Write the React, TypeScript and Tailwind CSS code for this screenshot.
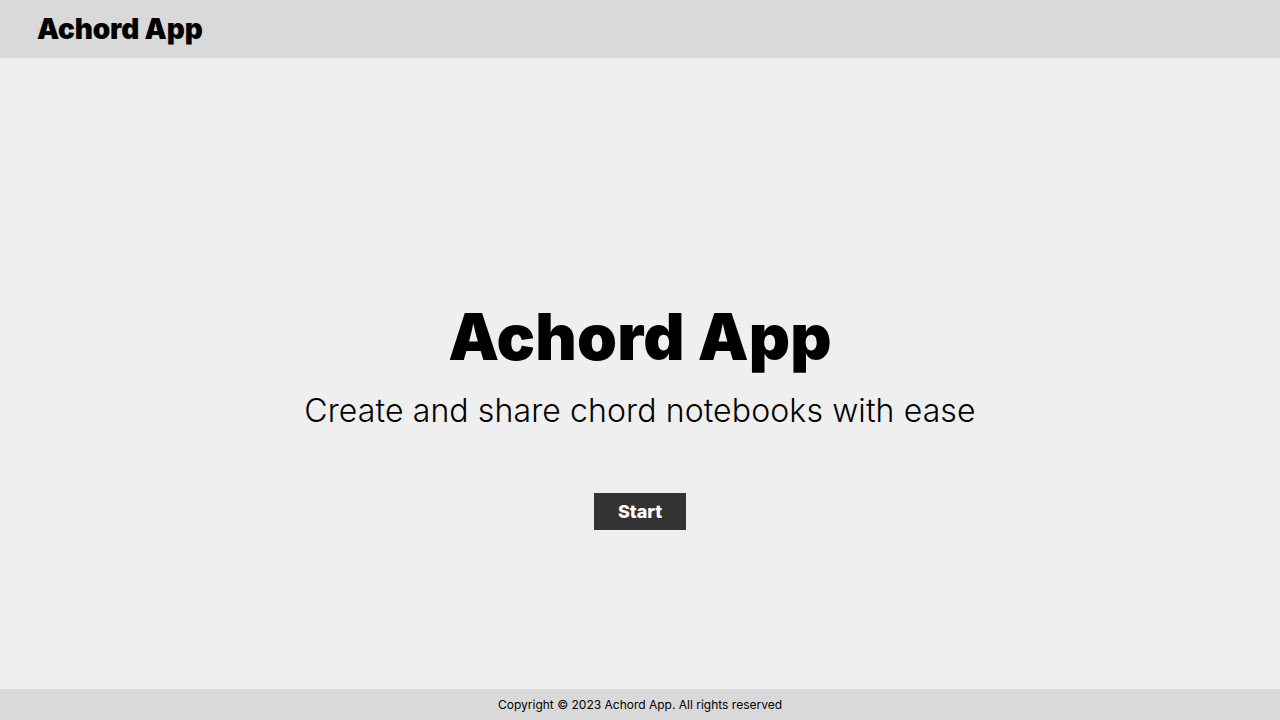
export default function App() {
  return (
    <div
      className="flex h-screen flex-col bg-[#efefef] text-black"
      style={{ fontFamily: 'Inter, "Noto Sans", sans-serif' }}
    >
      <header className="flex h-[58px] shrink-0 items-center bg-[#d9d9d9] px-[37px]">
        <h1 className="text-[28px] font-black tracking-[-0.005em]">Achord App</h1>
      </header>

      <main className="flex flex-1 flex-col items-center justify-center pt-[88px]">
        <h2 className="text-[64px] font-black leading-none tracking-[0.003em]">Achord App</h2>
        <p className="mt-[26px] text-[32px] font-light leading-none tracking-[0.12px]">
          Create and share chord notebooks with ease
        </p>
        <button className="mt-[66px] h-[37px] w-[92px] bg-[#333333] text-[18px] font-extrabold text-white">
          Start
        </button>
      </main>

      <footer className="flex h-[31px] shrink-0 items-center justify-center bg-[#d9d9d9] text-[12px]">
        Copyright © 2023 Achord App. All rights reserved
      </footer>
    </div>
  );
}
